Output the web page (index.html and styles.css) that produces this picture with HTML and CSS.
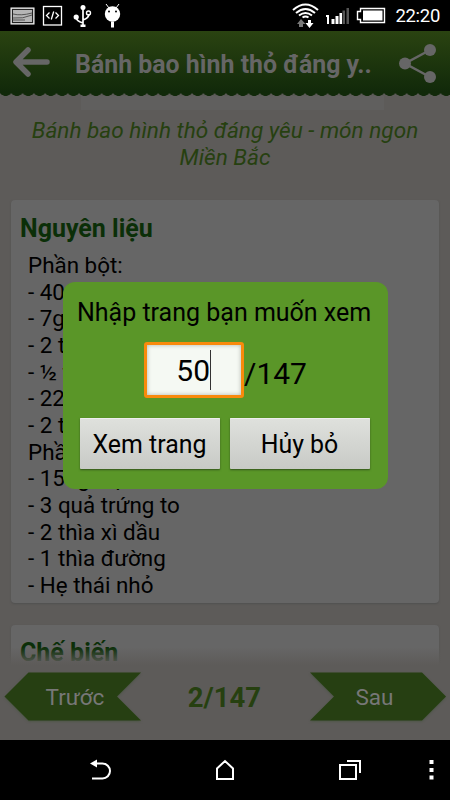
FILE: index.html
```html
<!DOCTYPE html>
<html lang="vi">
<head>
<meta charset="utf-8">
<title>Bánh bao hình thỏ đáng yêu</title>
<link rel="stylesheet" href="styles.css">
</head>
<body>
<div class="phone">
  <div class="status">
    <svg width="450" height="31" viewBox="0 0 450 31">
      <rect x="11" y="8" width="23" height="16" fill="#999" stroke="#fff"/>
      <rect x="12.500" y="9.500" width="20" height="13" fill="#b5b5b5" stroke="#222"/>
      <path d="M13 14q8 2 19-1M13 18q10 1 19-3M13 20h12" fill="none" stroke="#555"/>
      <rect x="43.500" y="6.500" width="18" height="18.500" fill="none" stroke="#fff" stroke-width="1.300"/>
      <path d="M49.500 12.500l-3 3 3 3M55.500 12.500l3 3-3 3M53.700 11.500l-2.400 8" fill="none" stroke="#fff" stroke-width="1.300"/>
      <path d="M83 7v19M76 17q0 4 7 6M83 20q6-2 6-6" fill="none" stroke="#fff" stroke-width="1.700"/>
      <circle cx="83" cy="7.500" r="2.500" fill="#fff"/><circle cx="76.200" cy="17" r="2.600" fill="#fff"/><circle cx="88.500" cy="13" r="2" fill="none" stroke="#fff" stroke-width="1.400"/><rect x="80.500" y="24.500" width="5" height="2.500" fill="#fff"/>
      <path d="M106 4l3 4M119 4l-3 4" stroke="#fff"/><circle cx="112.500" cy="14" r="7.700" fill="#fff"/><circle cx="109" cy="11.500" r="1" fill="#000"/><circle cx="116" cy="11.500" r="1" fill="#000"/><rect x="111" y="21.500" width="3" height="6" fill="#fff"/>
      <g fill="none" stroke="#fff" stroke-width="2"><path d="M293 10q12.500-11 25 0M296 13q9.500-8 19 0M299 15.500q6.500-5 13 0M302.500 17.500q3-2 6 0"/></g>
      <path d="M301 19l4.500 5H303v3h-4v-3h-2z" fill="#777"/><path d="M308 20h3v3h2.500l-4 5-4-5h2.500z" fill="#fff"/>
      <path d="M326 15h3v9h-2v-7h-1zM331.500 19h3v5h-3zM335.500 16h3v8h-3zM339.500 13h2.500v11h-2.500z" fill="#fff"/><path d="M342.500 10.500h2.500V24h-2.500zM346.500 8h2.500v16h-2.500z" fill="#555"/>
      <path d="M360.500 8.500h24v14h-24v-3h-3v-8h3z" fill="none" stroke="#fff" stroke-width="1.400"/><rect x="363" y="10.500" width="19.500" height="10" fill="#fff"/>
    </svg>
    <span class="clock">22:20</span>
  </div>
  <header class="header">
    <svg class="back" width="38" height="30" viewBox="0 0 38 30"><path d="M16 3L4 15l12 12M5 15h30" fill="none" stroke="#666" stroke-width="5.500" stroke-linecap="round" stroke-linejoin="round"/></svg>
    <h1 class="title">Bánh bao hình thỏ đáng y..</h1>
    <svg class="share" width="40" height="42" viewBox="0 0 40 42"><path d="M32 7L7 20.500 32 34" fill="none" stroke="#666" stroke-width="2.500"/><g fill="#666"><circle cx="32" cy="7" r="6"/><circle cx="7" cy="20.500" r="6"/><circle cx="32" cy="34" r="6"/></g></svg>
  </header>
  <div class="scallops"></div>
  <main class="content">
    <div class="photo"></div>
    <p class="caption">Bánh bao hình thỏ đáng yêu - món ngon<br>Miền Bắc</p>
    <section class="card ingredients">
      <h2>Nguyên liệu</h2>
      <div class="list">
        <div>Phần bột:</div><div>- 400g</div><div>- 7g</div><div>- 2 t</div><div>- ½ t</div><div>- 220</div><div>- 2 t</div><div>Phần</div><div>- 150g thịt</div><div>- 3 quả trứng to</div><div>- 2 thìa xì dầu</div><div>- 1 thìa đường</div><div>- Hẹ thái nhỏ</div>
      </div>
    </section>
    <section class="card steps"><h2>Chế biến</h2></section>
  </main>
  <footer class="pager">
    <svg class="ribbons" width="450" height="75" viewBox="0 0 450 75"><g fill="#263f12"><path d="M4.500 31.500L28.500 7.500H141L117 31.500l24 24H28.500z"/><path d="M310 7.500h112l24 24-24 24H310l24-24z"/></g></svg>
    <span class="prev">Trước</span><span class="page">2/147</span><span class="next">Sau</span>
  </footer>
  <nav class="nav">
    <svg width="450" height="60" viewBox="0 0 450 60">
      <g fill="none" stroke="#fff" stroke-width="2"><path d="M95 23.500h7.500a7.500 7.500 0 0 1 0 15H92"/><path d="M217 28.500l8-7.500 8 7.500V39h-16z"/><path d="M340 25h16v14h-16zM347 21h13v12"/></g>
      <path d="M90 23.500l7-4v8z" fill="#fff"/><path d="M429.500 20h4v4h-4zM429.500 28h4v4h-4zM429.500 35.500h4v4h-4z" fill="#fff"/>
    </svg>
  </nav>
  <div class="dialog">
    <p class="prompt">Nhập trang bạn muốn xem</p>
    <div class="entry"><div class="field"><span>50</span><i class="caret"></i></div><span class="total">/147</span></div>
    <div class="actions"><button>Xem trang</button><button>Hủy bỏ</button></div>
  </div>
</div>
</body>
</html>
```
FILE: styles.css
```css
* { box-sizing: border-box; }
body { margin: 0; font-family: Roboto, sans-serif; background: #000; }
h1, h2, p { margin: 0; }
svg { display: block; }
.phone { position: relative; width: 450px; height: 800px; overflow: hidden; display: flex; flex-direction: column; background: #5d5b59; }
.status { position: relative; height: 31px; flex: none; background: #000; }
.clock { position: absolute; right: 10px; top: 2px; font-size: 18.5px; letter-spacing: -0.3px; line-height: 28px; color: #fff; }
.header { height: 61px; flex: none; display: flex; align-items: center; background: linear-gradient(#2a4311, #11290a); color: #666; }
.back { margin-left: 12px; }
.title { width: 300px; margin-left: 25px; margin-top: 7px; font-size: 24.9px; line-height: 30px; font-weight: 700; white-space: nowrap; }
.share { margin-left: 23px; margin-top: 5px; }
.scallops { height: 4px; flex: none; background: radial-gradient(ellipse 6px 4px at 50% 0, #11290a 90%, transparent) 0 0 / 11.3px 4px repeat-x; }
.content { height: 569px; flex: none; overflow: hidden; padding: 0 11px; }
.photo { width: 303px; height: 14px; margin-left: 70px; background: #605f5e; }
.caption { height: 90px; padding-top: 8px; text-align: center; font-size: 22.6px; line-height: 26.67px; font-style: italic; color: #264010; white-space: nowrap; }
.card { background: #666; border-radius: 4px; box-shadow: 0 1px 2px #505050; padding: 14px 9px; }
.card h2 { font-size: 25px; line-height: 30px; font-weight: 700; color: #0b2f08; }
.ingredients { height: 403px; }
.list { padding: 8px 0 0 8px; font-size: 22.4px; line-height: 26.67px; color: #000; }
.steps { margin-top: 22px; padding-top: 13px; height: 60px; }
.pager { position: relative; height: 75px; flex: none; background: #5d5b59; display: grid; grid-template-columns: 150px 149px 151px; text-align: center; font-size: 22.5px; line-height: 65px; color: #777; }
.pager::before { content: ""; position: absolute; left: 0; right: 0; top: -18px; height: 18px; background: linear-gradient(rgba(93,91,89,0), #5d5b59); }
.ribbons { position: absolute; left: 0; top: 0; filter: drop-shadow(0 1px 1px #4b5544); }
.prev, .next, .page { position: relative; }
.page { font-size: 27.5px; font-weight: 700; color: #264010; }
.nav { height: 60px; flex: none; background: #000; }
.dialog { position: absolute; left: 63px; top: 282px; width: 325px; height: 207px; border-radius: 12px; background: #5a9628; color: #000; padding: 16px 17px; }
.prompt { margin-left: -3px; font-size: 25px; line-height: 30px; white-space: nowrap; }
.entry { display: flex; height: 56px; margin: 14px 0 0 64px; }
.field { width: 100px; height: 56px; border: 3px solid #f98a0c; border-radius: 3px; background: #f5f9f3; box-shadow: inset 0 0 4px #aeb5aa; display: flex; justify-content: flex-end; align-items: center; padding-right: 30px; font-size: 30px; }
.caret { width: 1px; height: 40px; background: #333; }
.total { font-size: 30px; line-height: 64px; }
.actions { display: flex; gap: 10px; margin-top: 20px; }
.actions button { width: 140px; height: 51px; padding: 2px 1px 0 0; border: 0; border-radius: 1px; background: linear-gradient(#dfe1dd, #c8cac6); box-shadow: 0 1px 2px #34551c, inset 0 1px #eee; font: 24.9px Roboto, sans-serif; color: #000; }
```
